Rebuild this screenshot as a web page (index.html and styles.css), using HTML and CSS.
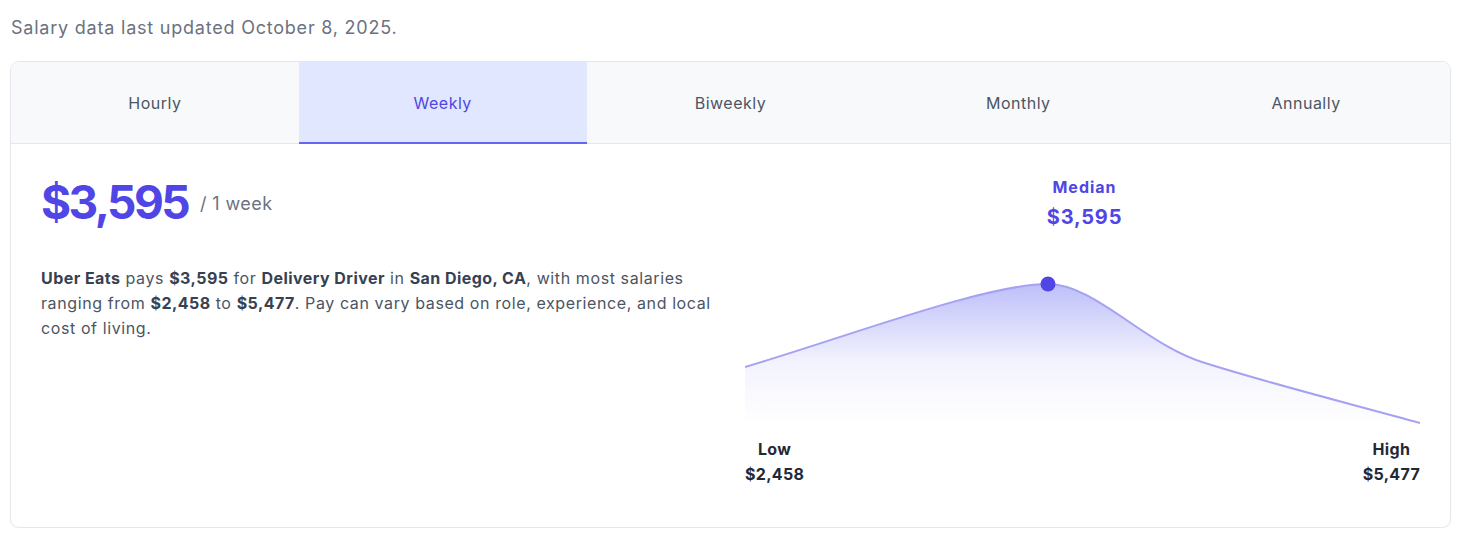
FILE: index.html
```html
<!DOCTYPE html>
<html>
<head>
<meta charset="utf-8">
<link rel="stylesheet" href="styles.css">
</head>
<body>
<div class="page">
  <p class="updated">Salary data last updated October 8, 2025.</p>
  <div class="card">
    <div class="tabs">
      <div class="tab">Hourly</div>
      <div class="tab active">Weekly</div>
      <div class="tab">Biweekly</div>
      <div class="tab">Monthly</div>
      <div class="tab">Annually</div>
    </div>
    <div class="body">
      <div class="left">
        <div class="amount"><span class="big">$3,595</span><span class="per">/ 1 week</span></div>
        <p class="desc"><b>Uber Eats</b> pays <b>$3,595</b> for <b>Delivery Driver</b> in <b>San Diego, CA</b>, with most salaries ranging from <b>$2,458</b> to <b>$5,477</b>. Pay can vary based on role, experience, and local cost of living.</p>
      </div>
      <div class="right">
        <div class="median">
          <div class="median-label">Median</div>
          <div class="median-value">$3,595</div>
        </div>
        <svg class="chart" viewBox="0 0 675 190" width="675" height="190">
          <defs>
            <linearGradient id="fillg" x1="0" y1="44" x2="0" y2="185" gradientUnits="userSpaceOnUse">
              <stop offset="0" stop-color="#6366f1" stop-opacity="0.42"/>
              <stop offset="0.55" stop-color="#6366f1" stop-opacity="0.08"/>
              <stop offset="1" stop-color="#6366f1" stop-opacity="0"/>
            </linearGradient>
          </defs>
          <path d="M0,127 C100,97.6 240,44 303,44 C350,44 400,105 460,123 C530,145 610,165 675,183 L675,190 L0,190 Z" fill="url(#fillg)"/>
          <path d="M0,127 C100,97.6 240,44 303,44 C350,44 400,105 460,123 C530,145 610,165 675,183" fill="none" stroke="#a5a1f3" stroke-width="2"/>
          <circle cx="303" cy="44" r="7.5" fill="#4f46e5"/>
        </svg>
        <div class="ends">
          <div class="end"><div class="end-label">Low</div><div class="end-value">$2,458</div></div>
          <div class="end"><div class="end-label">High</div><div class="end-value">$5,477</div></div>
        </div>
      </div>
    </div>
  </div>
</div>
</body>
</html>
```

FILE: styles.css
```css
* { box-sizing: border-box; }
html, body { margin: 0; padding: 0; background: #ffffff; }
body { font-family: Inter, "Noto Sans", Arial, sans-serif; color: #4b5563; }
.page { padding: 0 9px 0 10px; }
.updated { margin: 0; padding-top: 15px; height: 61px; font-size: 18px; line-height: 26px; color: #6b7280; padding-left: 1px; letter-spacing: 0.78px; }
.card { border: 1px solid #e5e7eb; border-radius: 9px; overflow: hidden; height: 467px; box-shadow: 0 1px 2px rgba(0,0,0,0.04); }
.tabs { display: grid; grid-template-columns: repeat(5, 1fr); background: #f8f9fb; border-bottom: 1px solid #e5e7eb; height: 82px; }
.tab { display: flex; align-items: center; justify-content: center; font-size: 16px; color: #4b5563; letter-spacing: 0.5px; }
.tab.active { background: #e0e7ff; color: #4f46e5; border-bottom: 2px solid #6366f1; margin-bottom: -1px; padding-top: 1px; }
.body { display: grid; grid-template-columns: 1fr 1fr; column-gap: 30px; padding: 30px 30px 0 30px; }
.amount { display: flex; align-items: center; gap: 12px; margin-top: 0; }
.big { font-size: 46px; font-weight: 700; color: #4f46e5; line-height: 56px; letter-spacing: -2.6px; }
.per { font-size: 18px; color: #6b7280; letter-spacing: 0.4px; padding-top: 2px; }
.desc { margin: 36px 0 0 0; font-size: 16px; line-height: 25px; color: #4b5563; letter-spacing: 0.6px; }
.desc b { color: #374151; font-weight: 700; letter-spacing: 0.45px; }
.right { display: flex; flex-direction: column; }
.median { text-align: center; color: #4f46e5; font-weight: 700; padding-left: 4px; }
.median-label { font-size: 16px; line-height: 24px; margin-top: 1px; letter-spacing: 1px; }
.median-value { font-size: 20px; line-height: 28px; margin-top: 4px; letter-spacing: 0.8px; }
.chart { display: block; margin-top: 9px; }
.ends { display: flex; justify-content: space-between; margin-top: 7px; }
.end { text-align: center; font-weight: 700; color: #1f2937; font-size: 16px; letter-spacing: 0.3px; }
.end-label { line-height: 24px; }
.end-value { line-height: 24px; margin-top: 1px; }
```
